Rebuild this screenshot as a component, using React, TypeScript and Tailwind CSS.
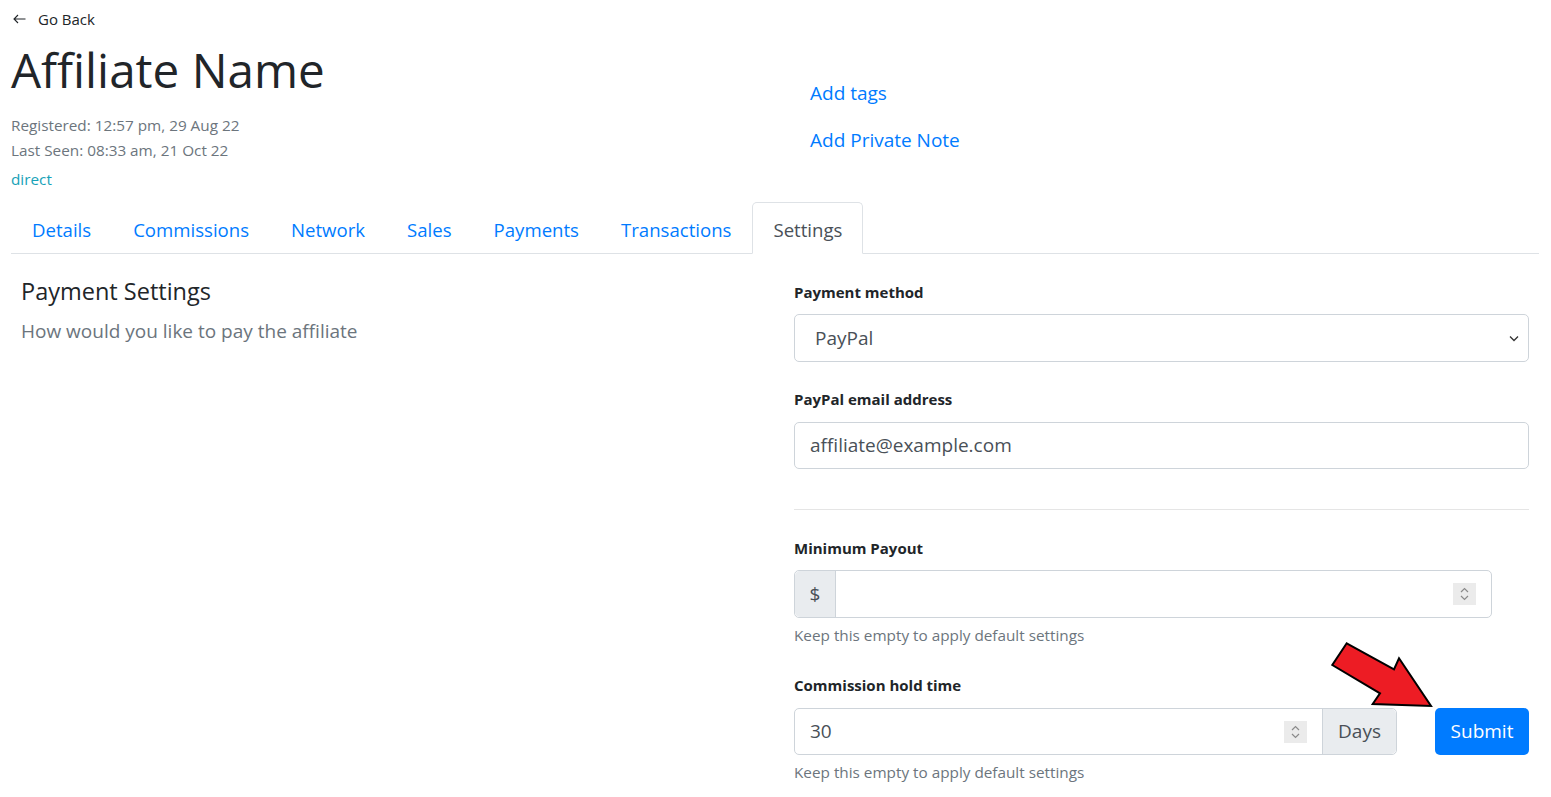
import React from "react";

const tabs = ["Details", "Commissions", "Network", "Sales", "Payments", "Transactions", "Settings"];

function Spinner() {
  return (
    <div className="flex h-[22px] w-[23px] flex-col items-center justify-center bg-[#ebebeb]">
      <svg width="9" height="16" viewBox="0 0 9 16" fill="none" stroke="#8a8a8a" strokeWidth="1.2">
        <path d="M1 6 L4.5 2.5 L8 6" />
        <path d="M1 10 L4.5 13.5 L8 10" />
      </svg>
    </div>
  );
}

function Label({ children }: { children: React.ReactNode }) {
  return <div className="text-[15px] font-bold leading-[24px] text-[#212529]">{children}</div>;
}

function Help() {
  return <div className="mt-[5px] text-[15.3px] leading-[24px] text-[#6c757d]">Keep this empty to apply default settings</div>;
}

export default function App() {
  return (
    <div className="relative min-h-[797px] bg-white pl-[11px] pr-[12px] pt-[7px] font-['Open_Sans',sans-serif] text-[#212529]">
      <a className="flex h-[24px] items-center gap-[12px] pl-[2px] text-[15px] leading-[24px]">
        <svg width="13" height="10" viewBox="0 0 13 10" fill="none" stroke="#212529" strokeWidth="1.1">
          <path d="M12.5 5 H1 M5 1 L1 5 L5 9" />
        </svg>
        Go Back
      </a>

      <div className="mt-[9px] flex">
        <div className="w-[799px]">
          <h1 className="text-[47.6px] leading-[60px] font-normal">Affiliate Name</h1>
          <div className="mt-[13px] text-[15.3px] leading-[25px] text-[#6c757d]">
            <div>Registered: 12:57 pm, 29 Aug 22</div>
            <div>Last Seen: 08:33 am, 21 Oct 22</div>
          </div>
          <div className="mt-[4px] text-[15.3px] leading-[25px] text-[#17a2b8]">direct</div>
        </div>
        <div className="flex flex-col gap-[17px] pt-[38px] text-[19px] leading-[30px] text-[#007bff]">
          <a>Add tags</a>
          <a>Add Private Note</a>
        </div>
      </div>

      <ul className="mt-[10px] flex border-b border-[#dee2e6]">
        {tabs.map((t) => (
          <li
            key={t}
            className={
              t === "Settings"
                ? "-mb-px rounded-t-[5px] border border-[#dee2e6] border-b-white bg-white px-[20px] pt-[12px] pb-[8px] text-[18.6px] leading-[30px] text-[#495057]"
                : "-mb-px rounded-t-[5px] border border-transparent px-[20px] pt-[12px] pb-[8px] text-[18.6px] leading-[30px] text-[#007bff]"
            }
          >
            {t}
          </li>
        ))}
      </ul>

      <div className="flex px-[10px]">
        <div className="flex-1 pt-[22px]">
          <h5 className="text-[23.5px] leading-[30px]">Payment Settings</h5>
          <p className="mt-[10px] text-[19px] leading-[30px] text-[#6c757d]">How would you like to pay the affiliate</p>
        </div>

        <div className="w-[735px] pt-[26px]">
          <Label>Payment method</Label>
          <div className="mt-[10px] flex h-[48px] items-center justify-between rounded-[5px] border border-[#ced4da] pl-[20px] pr-[9px] text-[19px] text-[#495057]">
            <span>PayPal</span>
            <svg width="10" height="7" viewBox="0 0 10 7" fill="none" stroke="#333" strokeWidth="1.3">
              <path d="M1 1.5 L5 5.5 L9 1.5" />
            </svg>
          </div>

          <div className="mt-[25px]">
            <Label>PayPal email address</Label>
          </div>
          <div className="mt-[11px] flex h-[47px] items-center rounded-[5px] border border-[#ced4da] px-[15px] text-[19px] text-[#495057]">
            affiliate@example.com
          </div>

          <hr className="mt-[40px] border-t border-[#e5e5e5]" />

          <div className="mt-[26px]">
            <Label>Minimum Payout</Label>
          </div>
          <div className="mt-[10px] flex h-[48px] w-[698px] rounded-[5px] border border-[#ced4da] text-[19px]">
            <div className="flex w-[41px] items-center justify-center rounded-l-[5px] border-r border-[#ced4da] bg-[#e9ecef] text-[#495057]">$</div>
            <div className="flex flex-1 items-center justify-end pr-[15px]">
              <Spinner />
            </div>
          </div>
          <Help />

          <div className="mt-[26px]">
            <Label>Commission hold time</Label>
          </div>
          <div className="mt-[11px] flex items-center">
            <div className="flex h-[47px] flex-1 rounded-[5px] border border-[#ced4da] text-[19px] text-[#495057]">
              <div className="flex flex-1 items-center justify-between pl-[15px] pr-[15px]">
                <span>30</span>
                <Spinner />
              </div>
              <div className="flex w-[74px] items-center justify-center rounded-r-[5px] border-l border-[#ced4da] bg-[#e9ecef]">Days</div>
            </div>
            <button className="ml-[38px] h-[47px] w-[94px] rounded-[5px] bg-[#007bff] text-[19px] text-white">Submit</button>
          </div>
          <Help />
        </div>
      </div>

      <svg className="absolute left-[1328px] top-[638px]" width="110" height="75" viewBox="1328 638 110 75">
        <polygon
          points="1346.7,643.3 1394,669.3 1399,658.3 1431,706 1372.7,704 1380,693.3 1332.3,665"
          fill="#ed1c24"
          stroke="#000"
          strokeWidth="2"
          strokeLinejoin="miter"
        />
      </svg>
    </div>
  );
}
